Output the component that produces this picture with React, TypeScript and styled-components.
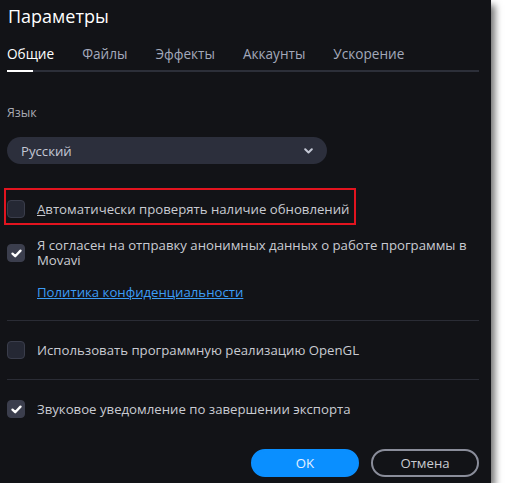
import React, {useState} from 'react'
import styled, {createGlobalStyle} from 'styled-components'

const GlobalStyle = createGlobalStyle`
  html, body {
    margin: 0;
    padding: 0;
    background: #ffffff;
  }
  body {
    font-family: 'Open Sans', 'DejaVu Sans', sans-serif;
  }
`

const Panel = styled.div`
  box-sizing: border-box;
  width: 491px;
  height: 483px;
  background: #121317;
  box-shadow: 4px 5px 7px rgba(0, 0, 0, 0.55);
  padding: 3px 12px 0 7px;
  display: flex;
  flex-direction: column;
  color: #c9cbd2;

  & > * {
    flex-shrink: 0;
  }
`

const Title = styled.h1`
  margin: 0 0 0 1px;
  font-size: 18px;
  line-height: 26px;
  font-weight: 400;
  color: #ffffff;
`

const TabBar = styled.div`
  display: flex;
  gap: 28px;
  margin-top: 16px;
  border-bottom: 2px solid #2c2f39;
`

const Tab = styled.button<{active?: boolean}>`
  position: relative;
  background: none;
  border: none;
  padding: 0 0 7px 0;
  font-family: inherit;
  font-size: 13.6px;
  line-height: 18px;
  color: ${(p) => (p.active ? '#ffffff' : '#a3a9bb')};
  cursor: pointer;

  &::after {
    content: '';
    position: absolute;
    left: 0;
    bottom: -2px;
    width: 26px;
    height: 2px;
    background: ${(p) => (p.active ? '#ffffff' : 'transparent')};
  }
`

const FieldLabel = styled.div`
  margin-top: 33px;
  font-size: 12.4px;
  line-height: 16px;
  color: #a9abb3;
`

const Select = styled.div`
  box-sizing: border-box;
  margin-top: 16px;
  width: 320px;
  height: 27px;
  border-radius: 14px;
  background: #2c2f3c;
  display: flex;
  align-items: center;
  justify-content: space-between;
  padding: 0 14px;
  font-size: 13.2px;
  color: #c3c7d4;
`

const Highlight = styled.div`
  box-sizing: border-box;
  margin: 24px 0 0 -3px;
  width: 352px;
  height: 37px;
  border: 2px solid #e2141f;
  padding: 0 0 5px 1px;
  display: flex;
  align-items: flex-end;
`

const Option = styled.label<{top?: number}>`
  display: flex;
  align-items: center;
  gap: 12px;
  margin-top: ${(p) => p.top ?? 0}px;
  font-size: 13.2px;
  line-height: 15px;
  color: #c9cbd2;
  cursor: pointer;
`

const Box = styled.span<{checked?: boolean}>`
  box-sizing: border-box;
  flex: none;
  width: 18px;
  height: 18px;
  border-radius: 4px;
  background: ${(p) => (p.checked ? '#3b3e4d' : '#252834')};
  border: 1px solid ${(p) => (p.checked ? '#3b3e4d' : '#3a3d4b')};
  display: flex;
  align-items: center;
  justify-content: center;
`

const OptionText = styled.span``

const Link = styled.a`
  margin: 17px 0 0 30px;
  font-size: 13.2px;
  line-height: 15px;
  color: #3c9cf5;
  text-decoration: underline;
  cursor: pointer;
  align-self: flex-start;
`

const Divider = styled.div<{top: number}>`
  margin-top: ${(p) => p.top}px;
  height: 1px;
  background: #2a2c35;
`

const Footer = styled.div`
  margin-top: 31px;
  display: flex;
  justify-content: flex-end;
  gap: 12px;
`

const Button = styled.button<{variant?: 'primary' | 'secondary'}>`
  box-sizing: border-box;
  width: 108px;
  height: 28px;
  border-radius: 14px;
  font-family: inherit;
  font-size: 13.2px;
  cursor: pointer;
  border: 2px solid
    ${(p) => (p.variant === 'primary' ? '#0a8fff' : '#8a8d9a')};
  background: ${(p) => (p.variant === 'primary' ? '#0a8fff' : 'transparent')};
  color: ${(p) => (p.variant === 'primary' ? '#e6f2ff' : '#c9cbd2')};
`

const Check = () => (
  <svg width="11" height="9" viewBox="0 0 11 9">
    <path
      d="M1.5 4.6 L4.2 7.2 L9.5 1.6"
      fill="none"
      stroke="#ffffff"
      strokeWidth="2.3"
      strokeLinecap="round"
      strokeLinejoin="round"
    />
  </svg>
)

const Chevron = () => (
  <svg width="9" height="6" viewBox="0 0 9 6">
    <path
      d="M1.2 1.2 L4.5 4.5 L7.8 1.2"
      fill="none"
      stroke="#c3c7d4"
      strokeWidth="2"
      strokeLinecap="round"
      strokeLinejoin="round"
    />
  </svg>
)

const tabs = ['Общие', 'Файлы', 'Эффекты', 'Аккаунты', 'Ускорение']

export default function App() {
  const [active, setActive] = useState(0)
  const [opts, setOpts] = useState([false, true, false, true])
  const toggle = (i: number) =>
    setOpts((o) => o.map((v, j) => (j === i ? !v : v)))

  return (
    <>
      <GlobalStyle />
      <Panel>
        <Title>Параметры</Title>

        <TabBar>
          {tabs.map((t, i) => (
            <Tab key={t} active={i === active} onClick={() => setActive(i)}>
              {t}
            </Tab>
          ))}
        </TabBar>

        <FieldLabel>Язык</FieldLabel>
        <Select>
          <span>Русский</span>
          <Chevron />
        </Select>

        <Highlight>
          <Option onClick={() => toggle(0)}>
            <Box checked={opts[0]}>{opts[0] && <Check />}</Box>
            <OptionText>
              <u>А</u>втоматически проверять наличие обновлений
            </OptionText>
          </Option>
        </Highlight>

        <Option top={13} onClick={() => toggle(1)}>
          <Box checked={opts[1]}>{opts[1] && <Check />}</Box>
          <OptionText>
            Я согласен на отправку анонимных данных о работе программы в
            Movavi
          </OptionText>
        </Option>
        <Link>Политика конфиденциальности</Link>

        <Divider top={20} />

        <Option top={20} onClick={() => toggle(2)}>
          <Box checked={opts[2]}>{opts[2] && <Check />}</Box>
          <OptionText>Использовать программную реализацию OpenGL</OptionText>
        </Option>

        <Divider top={20} />

        <Option top={20} onClick={() => toggle(3)}>
          <Box checked={opts[3]}>{opts[3] && <Check />}</Box>
          <OptionText>Звуковое уведомление по завершении экспорта</OptionText>
        </Option>

        <Footer>
          <Button variant="primary">OK</Button>
          <Button>Отмена</Button>
        </Footer>
      </Panel>
    </>
  )
}
